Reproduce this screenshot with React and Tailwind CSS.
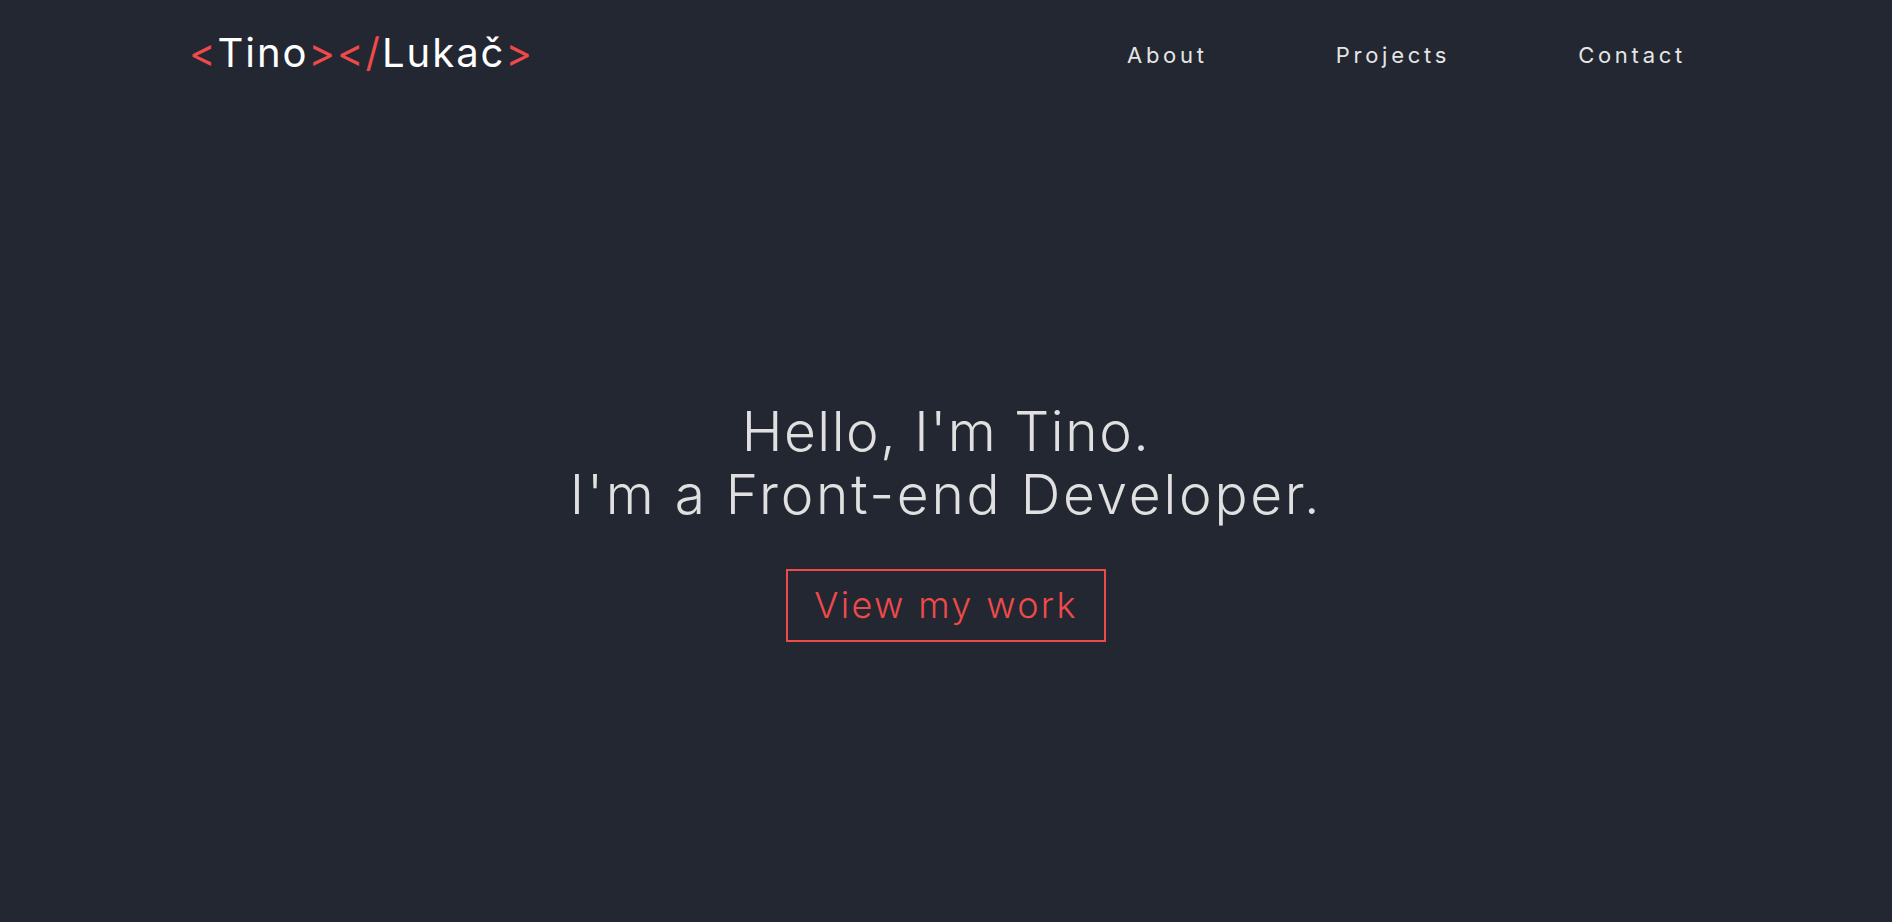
export default function App() {
    return (
        <div className="min-h-screen w-full bg-[#222731] font-['Inter',sans-serif] text-[#e3e3e3]">
            <header className="flex h-[106px] items-center justify-between pl-[189px] pr-[206px]">
                <a href="#" className="text-[40px] font-normal tracking-[0.05em] text-white">
                    <span className="text-[#ee4a4a]">&lt;</span>Tino<span className="text-[#ee4a4a]">&gt;&lt;/</span>Lukač<span className="text-[#ee4a4a]">&gt;</span>
                </a>
                <nav className="mt-[4px] flex items-center gap-[128px] text-[22px] tracking-[0.17em] text-[#e5e5e5]">
                    <a href="#">About</a>
                    <a href="#">Projects</a>
                    <a href="#">Contact</a>
                </nav>
            </header>

            <main className="flex flex-col items-center pt-[294px] pb-[280px]">
                <h1 className="text-center text-[55px] font-light leading-[63px] text-[#e0e0e0]">
                    <span className="block tracking-[0.028em]">Hello, I'm Tino.</span>
                    <span className="block tracking-[0.05em]">I'm a Front-end Developer.</span>
                </h1>
                <button className="mt-[43px] border-2 border-[#ee4a4a] px-[26px] py-3 text-[36px] font-light leading-[45px] tracking-[0.065em] text-[#ee4a4a]">
                    View my work
                </button>
            </main>
        </div>
    );
}
